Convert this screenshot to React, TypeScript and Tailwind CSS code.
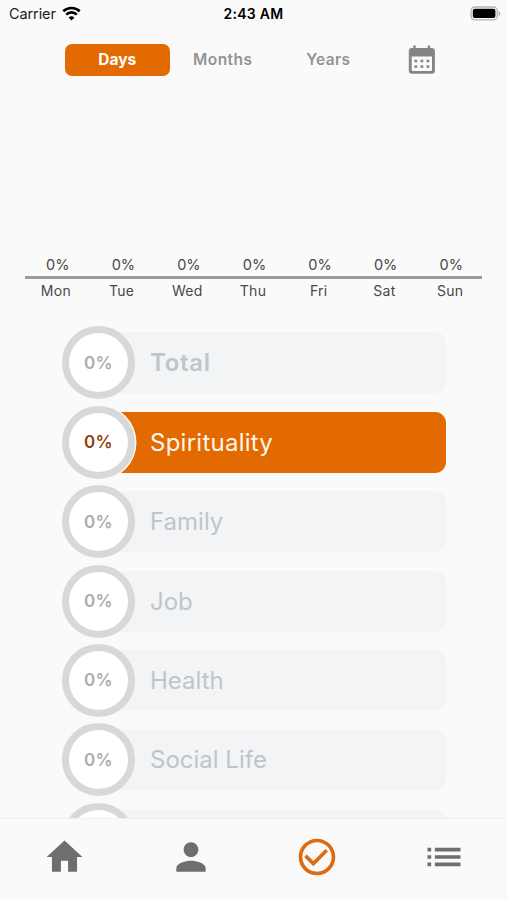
import React from "react";

const days = ["Mon", "Tue", "Wed", "Thu", "Fri", "Sat", "Sun"];

type Area = { name: string; bold?: boolean; active?: boolean; empty?: boolean };

const areas: Area[] = [
  { name: "Total", bold: true },
  { name: "Spirituality", active: true },
  { name: "Family" },
  { name: "Job" },
  { name: "Health" },
  { name: "Social Life" },
  { name: "", empty: true },
];

function StatusBar() {
  return (
    <div className="grid h-7 grid-cols-3 items-center text-[#1c1c1c]">
      <div className="flex items-center gap-[6px] pl-[9px]">
        <span className="text-[14.5px] leading-7 tracking-[-0.1px]">Carrier</span>
        <svg className="-mt-[2px]" width="19" height="15" viewBox="0 0 19 15" fill="none" stroke="#000" strokeWidth="2.6">
          <path d="M1.3 5.3a11.7 11.7 0 0 1 16.4 0" />
          <path d="M4.2 8.6a7.5 7.5 0 0 1 10.6 0" />
          <path d="M9.5 14.6 6.6 11.6a4.1 4.1 0 0 1 5.800 0z" fill="#000" stroke="none" />
        </svg>
      </div>
      <span className="-mt-[2px] text-center text-[14px] font-semibold tracking-[0.3px] text-black">2:43 AM</span>
      <svg className="-mt-[2px] mr-[5px] justify-self-end" width="32" height="15" viewBox="0 0 32 15">
        <rect x="1" y="1" width="26.2" height="12.8" rx="3.8" fill="#fafafa" stroke="#b4b4b4" strokeWidth="1.3" />
        <rect x="2.8" y="2.8" width="22.6" height="9.2" rx="2" fill="#000" />
        <path d="M28.6 5.2c2.2.8 2.2 3.8 0 4.6z" fill="#aaa" />
      </svg>
    </div>
  );
}

function CalendarIcon() {
  return (
    <svg width="28" height="30" viewBox="0 0 28 30" fill="#858585">
      <path
        fillRule="evenodd"
        d="M5.300.600h2.400v2.500h12V.600h2.400v2.500h1.600a3.200 3.200 0 0 1 3.200 3.200v19.300a3.200 3.200 0 0 1-3.200 3.200H4a3.200 3.200 0 0 1-3.200-3.200V6.300A3.200 3.200 0 0 1 4 3.100h1.300zM3.700 11.500v13.200c0 .8.500 1.300 1.300 1.300h17.700c.8 0 1.300-.5 1.300-1.300V11.500z"
      />
      {[6.4, 12.5, 18.5].map((x) => (
        <React.Fragment key={x}>
          <rect x={x} y="14.7" width="2.8" height="2.6" />
          <rect x={x} y="20.3" width="2.8" height="2.6" />
        </React.Fragment>
      ))}
    </svg>
  );
}

function Tabs() {
  return (
    <div className="mt-[15.5px] flex h-8 items-center pl-[64.5px] text-[15.5px] font-semibold leading-8 text-[#949494]">
      <div className="h-8 w-[105.5px] rounded-[7px] bg-[#e36a00] text-center font-bold text-white">Days</div>
      <div className="w-[105.5px] text-center tracking-[0.45px]">Months</div>
      <div className="w-[105.5px] text-center tracking-[0.3px]">Years</div>
      <div className="ml-[26.500px]">
        <CalendarIcon />
      </div>
    </div>
  );
}

function Chart() {
  return (
    <div className="mx-[25px] mt-[178.5px] text-center leading-[22px] text-[#484848]">
      <div className="-mr-[2px] grid h-[22px] grid-cols-7 text-[14.5px]">
        {days.map((d) => (
          <span key={d}>0%</span>
        ))}
      </div>
      <div className="h-[2.5px] bg-[#9b9b9b]" />
      <div className="-ml-[2px] -mr-px grid h-[22px] grid-cols-7 pt-px text-[14px] tracking-[0.3px]">
        {days.map((d) => (
          <span key={d}>{d}</span>
        ))}
      </div>
    </div>
  );
}

function AreaRow({ name, bold, active, empty }: Area) {
  return (
    <div className="flex h-[79.4px] shrink-0 items-center pl-[62px]">
      <div
        className={`z-10 flex size-[73px] shrink-0 items-center justify-center rounded-full border-[7px] border-[#d8d8d8] bg-white pt-px text-[17px] font-semibold tracking-[0.3px] ${
          active ? "text-[#91420a] ring-[1.5px] ring-[#fdfaf7]" : "text-[#acacac]"
        }`}
      >
        {empty ? null : "0%"}
      </div>
      <div
        className={`-ml-[36px] flex h-[61px] w-[347px] items-center rounded-r-[11px] pl-[51px] pt-px text-[24px] ${
          active ? "bg-[#e36a00] tracking-[0.25px] text-[#fff6ec]" : "bg-[#f2f4f5] text-[#c0c5ca]"
        } ${bold ? "font-semibold tracking-[0.7px]" : ""}`}
      >
        {name}
      </div>
    </div>
  );
}

function BottomNav() {
  return (
    <nav className="grid h-[82px] shrink-0 grid-cols-4 items-start justify-items-center border-t border-[#f0f0f0] bg-[#fafafa] pl-px pt-4 text-[#6e6e6e]">
      <svg width="43" height="44" viewBox="0 0 24 24" preserveAspectRatio="none" fill="currentColor">
        <path d="M10 20v-6h4v6h5v-8h3L12 3 2 12h3v8z" />
      </svg>
      <svg width="44" height="44" viewBox="0 0 24 24" fill="currentColor">
        <path d="M12 12c2.21 0 4-1.79 4-4s-1.79-4-4-4-4 1.79-4 4 1.79 4 4 4zm0 2c-2.67 0-8 1.34-8 4v2h16v-2c0-2.66-5.33-4-8-4z" />
      </svg>
      <svg width="44" height="44" viewBox="0 0 24 24" fill="#de6b12">
        <path d="M16.59 7.58 10 14.17l-3.59-3.58L5 12l5 5 8-8zM12 2C6.48 2 2 6.48 2 12s4.48 10 10 10 10-4.48 10-10S17.52 2 12 2zm0 18c-4.42 0-8-3.58-8-8s3.58-8 8-8 8 3.58 8 8-3.58 8-8 8z" />
      </svg>
      <svg width="44" height="44" viewBox="0 0 24 24" fill="currentColor">
        <path d="M3 13h2v-2H3v2zm0 4h2v-2H3v2zm0-8h2V7H3v2zm4 4h14v-2H7v2zm0 4h14v-2H7v2zM7 7v2h14V7H7z" />
      </svg>
    </nav>
  );
}

export default function App() {
  return (
    <div className="flex h-[900px] w-[507px] flex-col overflow-hidden bg-[#fafafa] font-['Inter','Liberation_Sans',sans-serif]">
      <div className="shrink-0">
        <StatusBar />
        <Tabs />
        <Chart />
      </div>
      <div className="mt-[22.8px] flex min-h-0 flex-1 flex-col overflow-hidden">
        {areas.map((a, i) => (
          <AreaRow key={i} {...a} />
        ))}
      </div>
      <BottomNav />
    </div>
  );
}
